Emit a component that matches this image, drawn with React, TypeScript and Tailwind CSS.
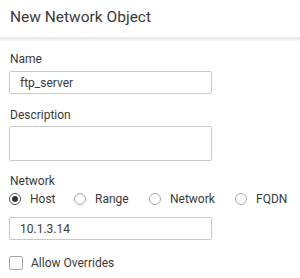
const font = { fontFamily: 'Roboto, "Liberation Sans", Arial, sans-serif' }

const radios = [
  { label: 'Host', checked: true, w: 'w-[65px]' },
  { label: 'Range', checked: false, w: 'w-[75px]' },
  { label: 'Network', checked: false, w: 'w-[86px]' },
  { label: 'FQDN', checked: false, w: 'w-[50px]' },
]

function Radio({ checked }: { checked: boolean }) {
  return (
    <span
      className={`flex h-[12px] w-[12px] shrink-0 items-center justify-center rounded-full border ${
        checked ? 'border-[#555]' : 'border-[#aaa]'
      } bg-white`}
    >
      {checked && <span className="h-[6px] w-[6px] rounded-full bg-[#333]" />}
    </span>
  )
}

export default function App() {
  return (
    <div className="h-[278px] w-[300px] overflow-hidden bg-white text-[#3a3a3a]" style={font}>
      <div className="flex h-[37px] items-center px-[10px] pb-[1px]">
        <h1 className="text-[15.5px] leading-none text-[#3a3a3a]">New Network Object</h1>
      </div>
      <div className="h-[4px] bg-gradient-to-b from-[#e6e6e6] to-[#f6f6f6]" />

      <div className="px-[9px] pt-[10px]">
        <label className="block pl-[1px] text-[12px] leading-[16px]">Name</label>
        <div className="mt-[4px] flex h-[23px] w-[203px] items-center rounded-[2px] border border-[#c8c8c8] px-[10px] text-[12px]">
          ftp_server
        </div>

        <label className="mt-[13px] block pl-[1px] text-[12px] leading-[16px]">Description</label>
        <div className="mt-[3px] h-[35px] w-[203px] rounded-[2px] border border-[#c8c8c8]" />

        <label className="mt-[12px] block pl-[1px] text-[12px] leading-[16px]">Network</label>
        <div className="mt-[2px] flex h-[16px] items-center text-[12px]">
          {radios.map((r) => (
            <div key={r.label} className={`flex shrink-0 items-center gap-[9px] ${r.w}`}>
              <Radio checked={r.checked} />
              <span>{r.label}</span>
            </div>
          ))}
        </div>

        <div className="mt-[10px] flex h-[23px] w-[203px] items-center rounded-[2px] border border-[#c8c8c8] px-[10px] text-[12px]">
          10.1.3.14
        </div>

        <div className="mt-[14px] flex items-center gap-[8px] text-[12px]">
          <span className="h-[14px] w-[14px] rounded-[2px] border border-[#a8a8a8] bg-white" />
          <span>Allow Overrides</span>
        </div>
      </div>
    </div>
  )
}
